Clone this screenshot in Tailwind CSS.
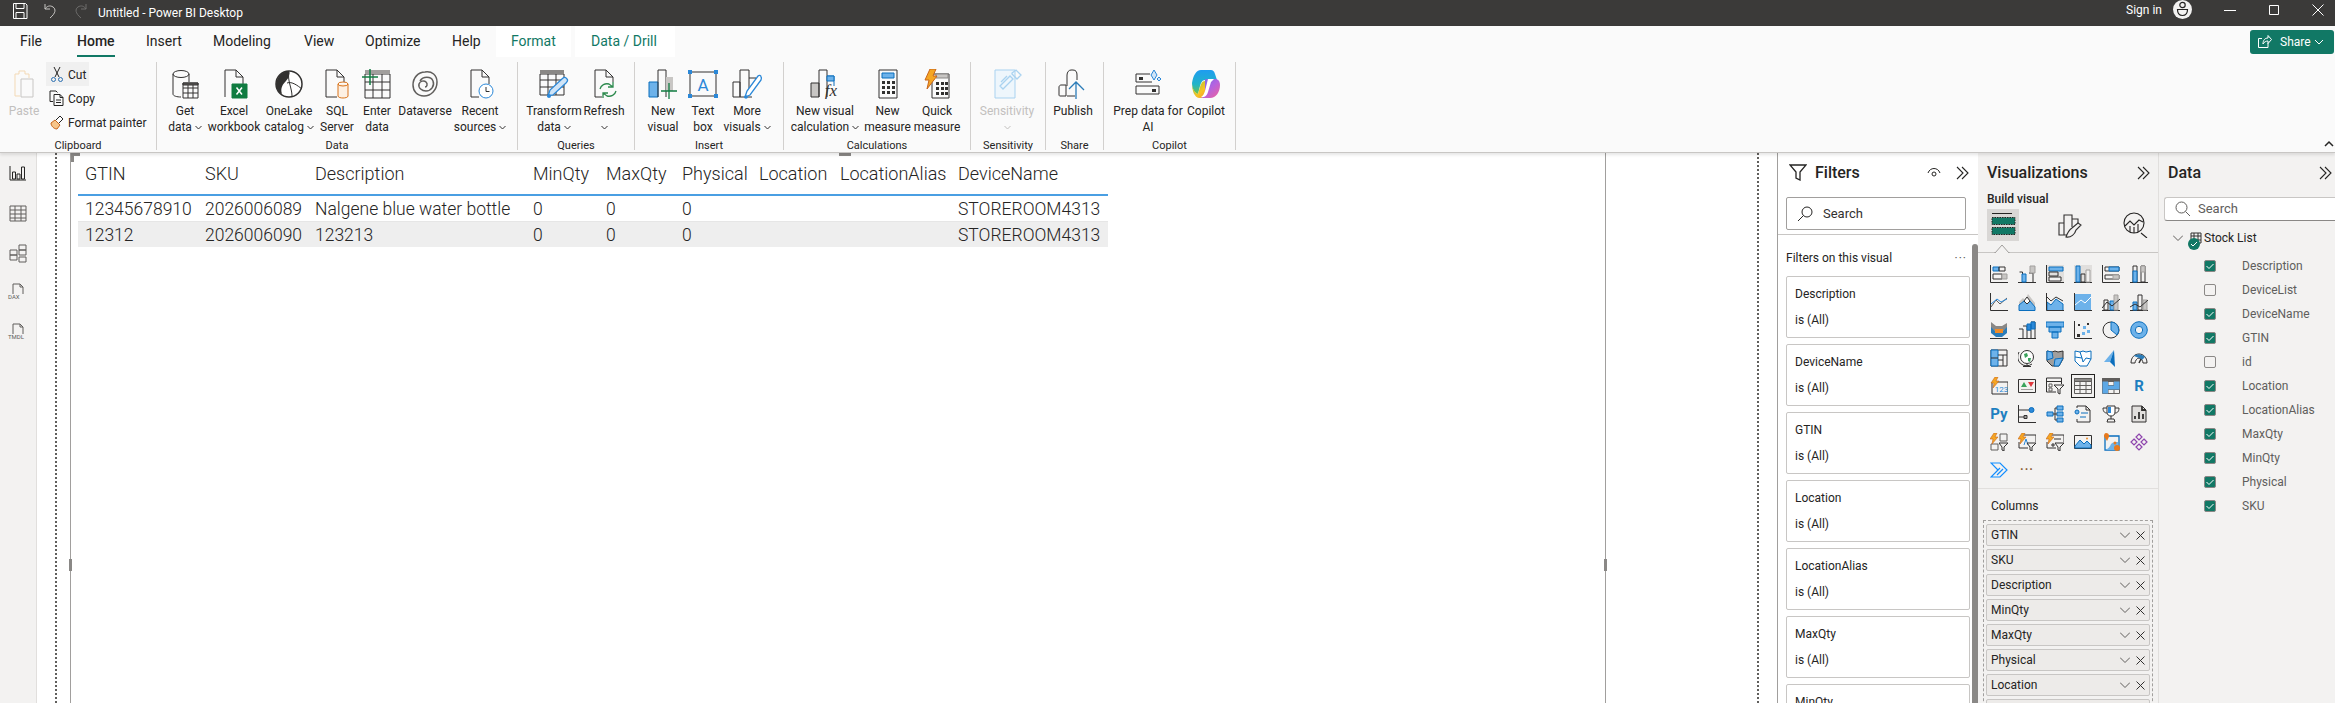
<!DOCTYPE html>
<html lang="en">
<head>
<meta charset="UTF-8">
<title>Untitled - Power BI Desktop</title>
<script src="https://cdn.jsdelivr.net/npm/@tailwindcss/browser@4"></script>
</head>
<body class="h-screen overflow-hidden flex flex-col bg-white text-[#252423] font-[Roboto,sans-serif] text-xs">

<!-- Title bar -->
<div class="h-[26px] shrink-0 bg-[#3b3a39] flex text-white">
  <svg class="w-[18px] h-[18px] ml-[11px] mt-[2px]" viewBox="0 0 18 18" fill="none" stroke="#fff"><path d="M2.5 1.5h12l1.5 1.500v13.500h-13.500zM5 1.500v5h8v-5M5 16.500v-6h8v6"/></svg>
  <svg class="w-[16px] h-[18px] ml-[14px] mt-[1px]" viewBox="0 0 16 18" fill="none" stroke="#c8c6c4"><path d="M2 3v5h5M2 8c2-3 5-4 8-2 3 2 3 6-3 11"/></svg>
  <svg class="w-[16px] h-[18px] ml-[13px] mt-[1px]" viewBox="0 0 16 18" fill="none" stroke="#6e6d6c"><path d="M14 3v5h-5M14 8c-2-3-5-4-8-2-3 2-3 6 3 11"/></svg>
  <span class="ml-[10px] leading-[26px]">Untitled - Power BI Desktop</span>
  <span class="ml-auto leading-[20px]">Sign in</span>
  <div class="w-[19px] h-[19px] ml-[11px] rounded-full bg-[#f3f2f1] overflow-hidden">
    <svg class="w-[19px] h-[19px]" viewBox="0 0 19 19" fill="none" stroke="#252423" stroke-width="1.200"><circle cx="9.500" cy="5" r="2.700"/><path d="M4.500 9.500h10c0 4-2 6-5 6s-5-2-5-6z"/></svg>
  </div>
  <svg class="w-[12px] h-[12px] ml-[32px] mt-[4px]" viewBox="0 0 12 12" fill="none" stroke="#fff"><path d="M0 6.500h12"/></svg>
  <svg class="w-[12px] h-[12px] ml-[32px] mt-[4px]" viewBox="0 0 12 12" fill="none" stroke="#fff"><path d="M1.500 1.500h9v9h-9z"/></svg>
  <svg class="w-[12px] h-[12px] ml-[32px] mt-[4px] mr-[11px]" viewBox="0 0 12 12" fill="none" stroke="#fff"><path d="M.5.5l11 11M11.500.5l-11 11"/></svg>
</div>

<!-- Ribbon -->
<div class="h-[127px] shrink-0 bg-[#fafafa] border-b border-[#c8c6c4] shadow-[0_2px_3px_rgba(0,0,0,0.1)] relative z-10">
  <div class="h-[31px] flex text-[14px] leading-[31px]">
    <span class="ml-[20px] w-[57px]">File</span>
    <span class="w-[69px]"><span class="inline-block h-[31px] w-[38px] font-medium border-b-2 border-[#117865]">Home</span></span>
    <span class="w-[67px]">Insert</span>
    <span class="w-[91px]">Modeling</span>
    <span class="w-[61px]">View</span>
    <span class="w-[87px]">Optimize</span>
    <span class="w-[44px]">Help</span>
    <span class="w-[75px] pl-[15px] bg-white text-[#117865]">Format</span>
    <span class="w-[100px] ml-[4px] pl-[16px] bg-white text-[#117865]">Data / Drill</span>
    <div class="ml-auto mr-[1px] mt-[4px] w-[84px] h-[24px] rounded-[3px] bg-[#117865] text-white text-[12px] leading-[24px] flex">
      <svg class="w-[15px] h-[15px] ml-[7px] mt-[4px]" viewBox="0 0 15 15" fill="none" stroke="#fff"><path d="M11 9v4.500H1.500V4.500H5M6 10c0-4 2-6 5-6V1.500l3.500 4-3.500 4V7c-2 0-4 1-5 3z"/></svg>
      <span class="ml-[8px]">Share</span>
      <svg class="w-[10px] h-[10px] ml-[3px] mt-[7px]" viewBox="0 0 10 10" fill="none" stroke="#fff"><path d="M1 3l4 4 4-4"/></svg>
    </div>
  </div>

  <div class="flex h-[96px] pt-[5px] relative text-[12px] leading-[16px] text-center">
    <!-- Clipboard -->
    <div class="w-[157px] h-[88px] border-r border-[#d2d0ce] flex flex-col">
      <div class="h-[77px] shrink-0 flex pl-[2px]">
        <div class="w-[44px] flex flex-col items-center pt-[7px] text-[#c2c0be]">
          <svg class="w-[28px] h-[30px]" viewBox="0 0 28 30" fill="none"><path d="M5 5h4V2h6v3h4v4M5 5v22h5" stroke="#f3d9b5"/><path d="M11 10h12v18H11z" stroke="#c8c6c4"/></svg>
          <span class="mt-[4px]">Paste</span>
        </div>
        <div class="flex flex-col items-start text-left">
          <div class="h-[24px] w-[43px] bg-[#f0f0f0] flex items-center pl-[3px]">
            <svg class="w-[16px] h-[17px] shrink-0" viewBox="0 0 16 17" fill="none" stroke="#252423"><path d="M5 1l5 10M11 1L6 11"/><circle cx="4.500" cy="13.500" r="2" stroke="#2b6fb0"/><circle cx="11.500" cy="13.500" r="2" stroke="#2b6fb0"/></svg>
            <span class="ml-[3px] mt-[2px]">Cut</span>
          </div>
          <div class="h-[24px] flex items-center pl-[3px]">
            <svg class="w-[16px] h-[16px] shrink-0" viewBox="0 0 16 16" fill="none" stroke="#252423"><path d="M4 11.500H1V1h6l1.500 1.500M5 4.500h6l3 3v8H5zM11 4.500v3h3M7 10h5M7 12.500h5"/></svg>
            <span class="ml-[3px] mt-[2px]">Copy</span>
          </div>
          <div class="h-[24px] flex items-center pl-[3px]">
            <svg class="w-[16px] h-[16px] shrink-0" viewBox="0 0 16 16" fill="none"><path d="M2 9l4-3 5 5-3 4c-3 0-6-3-6-6z" fill="#f7c58a" stroke="#c8651b"/><path d="M7 6l4-4 3 3-4 4" stroke="#252423" fill="#fff"/></svg>
            <span class="ml-[3px] mt-[2px] whitespace-nowrap">Format painter</span>
          </div>
        </div>
      </div>
      <div class="h-[14px] shrink-0 leading-[14px] text-[11px]">Clipboard</div>
    </div>

    <!-- Data -->
    <div class="w-[361px] h-[88px] border-r border-[#d2d0ce] flex flex-col">
      <div class="h-[77px] shrink-0 flex pl-[6px]">
        <div class="w-[44px] flex flex-col items-center pt-[7px]">
          <svg class="w-[28px] h-[30px]" viewBox="0 0 28 30" fill="none" stroke="#323130"><path d="M2 5v20c0 2 4 3 8 3M18 5v8"/><ellipse cx="10" cy="5" rx="8" ry="3.500"/><path d="M12 14h15v15H12zM12 19h15M12 24h15M17 14v15M22 14v15"/><path d="M12 14h15v2H12z" fill="#605e5c"/></svg>
          <span class="mt-[4px]">Get<br>data <svg class="inline w-[7px] h-[5px]" viewBox="0 0 7 5" fill="none" stroke="#323130"><path d="M.5 1l3 3 3-3"/></svg></span>
        </div>
        <div class="w-[54px] flex flex-col items-center pt-[7px]">
          <svg class="w-[28px] h-[30px]" viewBox="0 0 28 30" fill="none" stroke="#323130"><path d="M5 28V1h11l7 7v8M16 1v7h7"/><path d="M12 15h15v14H12z" fill="#107c41" stroke="#107c41"/><path d="M16.500 18.500l5.500 7M22 18.500l-5.500 7" stroke="#fff" stroke-width="1.500"/></svg>
          <span class="mt-[4px]">Excel<br>workbook</span>
        </div>
        <div class="w-[56px] flex flex-col items-center pt-[7px]">
          <svg class="w-[30px] h-[30px]" viewBox="0 0 30 30" fill="none"><circle cx="15" cy="15" r="13" fill="#fff" stroke="#323130" stroke-width="1.500"/><path d="M2 15C3 7 9 2 15 2c1 3 0 7-3 10-3 3-6 7-4 13-4-2-6-6-6-10z" fill="#323130"/><path d="M13 14c5-2 11 3 15 6M15 3c-2 8 3 16 3 24" stroke="#323130"/></svg>
          <span class="mt-[4px]">OneLake<br>catalog <svg class="inline w-[7px] h-[5px]" viewBox="0 0 7 5" fill="none" stroke="#323130"><path d="M.5 1l3 3 3-3"/></svg></span>
        </div>
        <div class="w-[40px] flex flex-col items-center pt-[7px]">
          <svg class="w-[28px] h-[30px]" viewBox="0 0 28 30" fill="none" stroke="#323130"><path d="M14 28H3V1h11l7 7v5M14 1v7h7"/><path d="M15 15v12c0 1.500 3 2 5 2s5-.5 5-2V15" stroke="#d9731a" fill="#fdf0e3"/><ellipse cx="20" cy="15" rx="5" ry="2" stroke="#d9731a"/></svg>
          <span class="mt-[4px]">SQL<br>Server</span>
        </div>
        <div class="w-[40px] flex flex-col items-center pt-[7px]">
          <svg class="w-[30px] h-[30px]" viewBox="0 0 30 30" fill="none" stroke="#323130"><path d="M3 5h25v24H3zM3 13h25M3 21h25M11 5v24M20 5v24"/><path d="M3 1h25v4H3z" fill="#a19f9d" stroke="none"/><path d="M8 0v16M0 8h16" stroke="#107c41" stroke-width="1.500"/></svg>
          <span class="mt-[4px]">Enter<br>data</span>
        </div>
        <div class="w-[56px] flex flex-col items-center pt-[7px]">
          <svg class="w-[28px] h-[30px]" viewBox="0 0 28 30" fill="none" stroke="#605e5c" stroke-width="1.500"><path d="M14 3c7-1 12 3 12 10 0 8-6 14-13 14C6 27 2 22 2 16 2 9 7 3 14 3z"/><path d="M9 12c3-5 11-5 13 0 2 5-2 10-7 10-4 0-8-3-7-7 1-3 5-4 7-2 2 2 1 5-1 5"/></svg>
          <span class="mt-[4px]">Dataverse</span>
        </div>
        <div class="w-[54px] flex flex-col items-center pt-[7px]">
          <svg class="w-[28px] h-[30px]" viewBox="0 0 28 30" fill="none" stroke="#323130"><path d="M13 28H5V1h11l7 7v7M16 1v7h7"/><circle cx="20" cy="22" r="7" stroke="#2b88d8" fill="#fff"/><path d="M20 18v4.500h3.500" stroke="#323130"/></svg>
          <span class="mt-[4px]">Recent<br>sources <svg class="inline w-[7px] h-[5px]" viewBox="0 0 7 5" fill="none" stroke="#323130"><path d="M.5 1l3 3 3-3"/></svg></span>
        </div>
      </div>
      <div class="h-[14px] shrink-0 leading-[14px] text-[11px]">Data</div>
    </div>

    <!-- Queries -->
    <div class="w-[117px] h-[88px] border-r border-[#d2d0ce] flex flex-col">
      <div class="h-[77px] shrink-0 flex pl-[6px]">
        <div class="w-[60px] flex flex-col items-center pt-[7px]">
          <svg class="w-[30px] h-[30px]" viewBox="0 0 30 30" fill="none" stroke="#323130"><path d="M1 5h24v21H1zM1 11h24M1 18h24M9 5v21M17 5v21"/><path d="M1 1h24v4H1z" fill="#8a8886" stroke="none"/><path d="M9 27l2-6L24 9c1-1 3-1 4 1 1 1 0 3-1 4L14 26z" fill="#cfe4f7" stroke="#2b88d8" stroke-width="1.300"/><circle cx="10" cy="27" r="2" fill="#2b88d8" stroke="none"/></svg>
          <span class="mt-[4px]">Transform<br>data <svg class="inline w-[7px] h-[5px]" viewBox="0 0 7 5" fill="none" stroke="#323130"><path d="M.5 1l3 3 3-3"/></svg></span>
        </div>
        <div class="w-[40px] flex flex-col items-center pt-[7px]">
          <svg class="w-[28px] h-[30px]" viewBox="0 0 28 30" fill="none" stroke="#323130"><path d="M12 28H5V1h11l7 7v5M16 1v7h7"/><path d="M10 20c1-4 5-6 9-5l4 3M26 22c-1 4-5 6-9 5l-4-3M23 13v5h-5M13 29v-5h5" stroke="#2d8a4e" stroke-width="1.300"/></svg>
          <span class="mt-[4px]">Refresh<br><svg class="inline w-[7px] h-[5px]" viewBox="0 0 7 5" fill="none" stroke="#323130"><path d="M.5 1l3 3 3-3"/></svg></span>
        </div>
      </div>
      <div class="h-[14px] shrink-0 leading-[14px] text-[11px]">Queries</div>
    </div>

    <!-- Insert -->
    <div class="w-[149px] h-[88px] border-r border-[#d2d0ce] flex flex-col">
      <div class="h-[77px] shrink-0 flex pl-[8px]">
        <div class="w-[40px] flex flex-col items-center pt-[7px]">
          <svg class="w-[30px] h-[30px]" viewBox="0 0 30 30" fill="none" stroke="#323130"><path d="M1 13h9v15H1z" fill="#6db2ea" stroke="#0a6ebd"/><path d="M10 28V1h8v27"/><path d="M18 8h7v14h-7z" fill="#c8c6c4" stroke="none"/><path d="M21 14v16M13 22h16" stroke="#107c41" stroke-width="1.300"/></svg>
          <span class="mt-[4px]">New<br>visual</span>
        </div>
        <div class="w-[40px] flex flex-col items-center pt-[7px]">
          <svg class="w-[30px] h-[30px]" viewBox="0 0 30 30" fill="none" stroke="#323130"><path d="M2 3h26v24H2z"/><path d="M0 1h4v4H0zM26 1h4v4h-4zM0 25h4v4H0zM26 25h4v4h-4z" fill="#2b88d8" stroke="none"/><text x="15" y="22" text-anchor="middle" font-size="17" font-family="Roboto" fill="#2b88d8" stroke="none">A</text></svg>
          <span class="mt-[4px]">Text<br>box</span>
        </div>
        <div class="w-[48px] flex flex-col items-center pt-[7px]">
          <svg class="w-[30px] h-[30px]" viewBox="0 0 30 30" fill="none" stroke="#323130"><path d="M1 28V13h7v15zM8 28V1h9v20M17 9h7v4M8 28h12"/><path d="M13 28l2-6L26 7c1-1 3-1 3 1 1 1 0 2 0 3L18 26z" fill="#fff" stroke="#2b88d8" stroke-width="1.300"/><circle cx="14" cy="28" r="1.800" fill="#2b88d8" stroke="none"/></svg>
          <span class="mt-[4px]">More<br>visuals <svg class="inline w-[7px] h-[5px]" viewBox="0 0 7 5" fill="none" stroke="#323130"><path d="M.5 1l3 3 3-3"/></svg></span>
        </div>
      </div>
      <div class="h-[14px] shrink-0 leading-[14px] text-[11px]">Insert</div>
    </div>

    <!-- Calculations -->
    <div class="w-[187px] h-[88px] border-r border-[#d2d0ce] flex flex-col">
      <div class="h-[77px] shrink-0 flex pl-[3px]">
        <div class="w-[76px] flex flex-col items-center pt-[7px]">
          <svg class="w-[30px] h-[30px]" viewBox="0 0 30 30" fill="none" stroke="#323130"><path d="M1 14h8v14H1z" fill="#c8c6c4"/><path d="M9 28V1h8v27"/><path d="M17 7h7v10" stroke="#0a6ebd"/><path d="M17 7h7v5h-7z" fill="#6db2ea" stroke="#0a6ebd"/><text x="21" y="27" text-anchor="middle" font-size="17" font-style="italic" font-family="Liberation Serif" fill="#323130" stroke="none">fx</text></svg>
          <span class="mt-[4px] whitespace-nowrap">New visual<br>calculation <svg class="inline w-[7px] h-[5px]" viewBox="0 0 7 5" fill="none" stroke="#323130"><path d="M.5 1l3 3 3-3"/></svg></span>
        </div>
        <div class="w-[49px] flex flex-col items-center pt-[7px]">
          <svg class="w-[22px] h-[30px]" viewBox="0 0 22 30" fill="none" stroke="#323130"><path d="M2 1h18v28H2z"/><path d="M5 4h12v5H5z" fill="#6db2ea" stroke="#0a6ebd"/><path d="M5 12h3v3H5zM10 12h3v3h-3zM15 12h3v3h-3zM5 17h3v3H5zM10 17h3v3h-3zM15 17h3v3h-3zM5 22h3v3H5zM10 22h3v3h-3zM15 22h3v3h-3z" fill="#323130" stroke="none"/></svg>
          <span class="mt-[4px]">New<br>measure</span>
        </div>
        <div class="w-[50px] flex flex-col items-center pt-[7px]">
          <svg class="w-[26px] h-[30px]" viewBox="0 0 26 30" fill="none" stroke="#323130"><path d="M8 5h17v24H8z"/><path d="M12 5h12v4H12z" fill="#c8c6c4" stroke="#8a8886"/><path d="M12 13h3v3h-3zM17 13h3v3h-3zM21 13h3v3h-3zM12 18h3v3h-3zM17 18h3v3h-3zM21 18h3v3h-3zM12 23h3v3h-3zM17 23h3v3h-3zM21 23h3v3h-3z" fill="#323130" stroke="none"/><path d="M6 0h6L9 7h4L3 20l2-9H1z" fill="#f5a623" stroke="#c8651b"/></svg>
          <span class="mt-[4px]">Quick<br>measure</span>
        </div>
      </div>
      <div class="h-[14px] shrink-0 leading-[14px] text-[11px]">Calculations</div>
    </div>

    <!-- Sensitivity -->
    <div class="w-[75px] h-[88px] border-r border-[#d2d0ce] flex flex-col">
      <div class="h-[77px] shrink-0 flex pl-[6px]">
        <div class="w-[60px] flex flex-col items-center pt-[7px] text-[#c2c0be]">
          <svg class="w-[30px] h-[30px]" viewBox="0 0 30 30" fill="none" stroke="#a9d2f0"><path d="M3 1h20v28H3z" fill="#eef6fc"/><path d="M8 17l10-10 3 3-10 10zM20 4l4-3 5 5-4 4-5-5zM9 13l6-6" stroke-width="1.300"/></svg>
          <span class="mt-[4px]">Sensitivity<br><svg class="inline w-[7px] h-[5px]" viewBox="0 0 7 5" fill="none" stroke="#c2c0be"><path d="M.5 1l3 3 3-3"/></svg></span>
        </div>
      </div>
      <div class="h-[14px] shrink-0 leading-[14px] text-[11px]">Sensitivity</div>
    </div>

    <!-- Share -->
    <div class="w-[58px] h-[88px] border-r border-[#d2d0ce] flex flex-col">
      <div class="h-[77px] shrink-0 flex pl-[4px]">
        <div class="w-[46px] flex flex-col items-center pt-[7px]">
          <svg class="w-[30px] h-[30px]" viewBox="0 0 30 30" fill="none" stroke="#323130"><path d="M4 27H2c-1 0-1-1-1-1V18c0-1 1-2 2-2h5v11zM9 17V6c0-3 2-5 4-5h2c3 0 4 2 4 5v5M9 27h8"/><path d="M18 30V13M11 20l7-7 8 8" stroke="#2b7cb8" stroke-width="1.300"/></svg>
          <span class="mt-[4px]">Publish</span>
        </div>
      </div>
      <div class="h-[14px] shrink-0 leading-[14px] text-[11px]">Share</div>
    </div>

    <!-- Copilot -->
    <div class="w-[132px] h-[88px] border-r border-[#d2d0ce] flex flex-col">
      <div class="h-[77px] shrink-0 flex pl-[8px]">
        <div class="w-[72px] flex flex-col items-center pt-[7px]">
          <svg class="w-[26px] h-[30px]" viewBox="0 0 26 30" fill="none" stroke="#323130"><path d="M1 5h14M1 17h23v8H1zM1 5v8h16"/><path d="M4 8h4v3H4zM17 20h4v3h-4z" fill="#323130" stroke="none"/><path d="M16 6l3-5 3 5-3 5zM22 10l2-2 2 2-2 2z" stroke="#2b88d8" fill="#cfe4f7"/></svg>
          <span class="mt-[4px] whitespace-nowrap">Prep data for<br>AI</span>
        </div>
        <div class="w-[44px] flex flex-col items-center pt-[7px]">
          <svg class="w-[30px] h-[30px]" viewBox="0 0 30 30">
            <defs>
              <linearGradient id="cpa" x1="0" y1="0" x2="0" y2="1"><stop offset="0" stop-color="#1f9cf0"/><stop offset=".6" stop-color="#21b4c8"/><stop offset="1" stop-color="#6cc24a"/></linearGradient>
              <linearGradient id="cpb" x1="0" y1="0" x2="1" y2="1"><stop offset="0" stop-color="#8dc63f"/><stop offset=".6" stop-color="#f7c325"/><stop offset="1" stop-color="#f08c28"/></linearGradient>
              <linearGradient id="cpc" x1="0" y1="0" x2="1" y2="1"><stop offset="0" stop-color="#6a6fe8"/><stop offset=".5" stop-color="#b463e0"/><stop offset="1" stop-color="#f0609a"/></linearGradient>
            </defs>
            <path d="M10 1h10c2 0 3 1 4 4l2 6H14c-3 0-4 3-5 6l-2 8C3 24 1 19 1 14 2 7 5 1 10 1z" fill="url(#cpa)"/>
            <path d="M1 14c0 7 2 15 8 15 3 0 4-2 5-5l3-12h-3c-3 0-4 3-5 6l-2 7C4 24 1 19 1 14z" fill="url(#cpb)"/>
            <path d="M14 10h10c3 0 5 2 5 6 0 7-4 13-10 13H9c3 0 4-2 5-5z" fill="url(#cpc)"/>
            <path d="M17 10h6l-3 3-3 10c-1 3-2 4-4 5h-3c2-1 3-3 4-6z" fill="#fff"/>
          </svg>
          <span class="mt-[4px]">Copilot</span>
        </div>
      </div>
      <div class="h-[14px] shrink-0 leading-[14px] text-[11px]">Copilot</div>
    </div>

    <svg class="absolute right-[1px] bottom-[5px] w-[10px] h-[8px]" viewBox="0 0 10 8" fill="none" stroke="#252423" stroke-width="1.500"><path d="M1 6l4-4 4 4"/></svg>
  </div>
</div>

<!-- Body -->
<div class="flex-1 flex min-h-0">
  <!-- View switcher -->
  <div class="w-[37px] shrink-0 bg-[#f3f2f1] border-r border-[#e1dfdd] flex flex-col items-center pt-[10px] gap-[20px]">
    <svg class="w-[20px] h-[20px]" viewBox="0 0 20 20" fill="none" stroke="#252423"><path d="M2 3v14h16M4.500 9h3v7h-3zM9 11h3v5H9zM13.500 4h3v12h-3z"/></svg>
    <svg class="w-[20px] h-[20px]" viewBox="0 0 20 20" fill="none" stroke="#605e5c"><path d="M2 3h16v15H2zM2 7h16M2 11h16M2 15h16M7 3v15M13 3v15"/></svg>
    <svg class="w-[20px] h-[20px]" viewBox="0 0 20 20" fill="none" stroke="#605e5c"><path d="M11 2h7v5h-7zM11 7h7v5h-7zM11 14h7v5h-7zM2 7h7v5H2zM2 12h7v5H2z"/></svg>
    <div class="relative w-[20px] h-[20px]">
      <svg class="w-[20px] h-[20px]" viewBox="0 0 20 20" fill="none" stroke="#605e5c"><path d="M5 11V1h7l3 3v7M12 1v3h3"/></svg>
      <span class="absolute left-0 top-[10px] text-[6px] leading-[7px] text-[#605e5c]">DAX</span>
    </div>
    <div class="relative w-[20px] h-[20px]">
      <svg class="w-[20px] h-[20px]" viewBox="0 0 20 20" fill="none" stroke="#605e5c"><path d="M5 11V1h7l3 3v7M12 1v3h3"/></svg>
      <span class="absolute left-0 top-[10px] text-[6px] leading-[7px] text-[#605e5c]">TMDL</span>
    </div>
  </div>

  <!-- Report canvas -->
  <div class="w-[1740px] shrink-0 flex pl-[18px] pr-[18px]">
    <div class="flex-1 flex border-x-2 border-dotted border-[#605e5c] pl-[13px]">
      <div class="relative w-[1536px] border-x border-[#a19f9d]">
        <div class="absolute left-0 top-0 w-[9px] h-[3px] bg-[#8a8886]"></div>
        <div class="absolute left-0 top-0 w-[3px] h-[9px] bg-[#8a8886]"></div>
        <div class="absolute left-[768px] top-0 w-[12px] h-[3px] bg-[#8a8886]"></div>
        <div class="absolute -left-[2px] top-[406px] w-[3px] h-[12px] bg-[#8a8886]"></div>
        <div class="absolute -right-[2px] top-[406px] w-[3px] h-[12px] bg-[#8a8886]"></div>
        <div class="ml-[7px] w-[1030px] text-[17.5px] font-light text-[#252423]">
          <div class="h-[43px] text-[18px] grid grid-cols-[119px_110px_218px_73px_76px_77px_81px_118px_158px] items-center border-b-2 border-[#4a9fe3]">
            <span class="pl-[7px]">GTIN</span><span class="pl-[8px]">SKU</span><span class="pl-[8px]">Description</span><span class="pl-[8px]">MinQty</span><span class="pl-[8px]">MaxQty</span><span class="pl-[8px]">Physical</span><span class="pl-[8px]">Location</span><span class="pl-[8px] whitespace-nowrap">LocationAlias</span><span class="pl-[8px]">DeviceName</span>
          </div>
          <div class="h-[26px] pt-[2px] grid grid-cols-[119px_110px_218px_73px_76px_77px_81px_118px_158px] items-center border-b border-[#e6e6e6]">
            <span class="pl-[7px]">12345678910</span><span class="pl-[8px]">2026006089</span><span class="pl-[8px] whitespace-nowrap">Nalgene blue water bottle</span><span class="pl-[8px]">0</span><span class="pl-[8px]">0</span><span class="pl-[8px]">0</span><span></span><span></span><span class="pl-[8px]">STOREROOM4313</span>
          </div>
          <div class="h-[25px] pt-[2px] grid grid-cols-[119px_110px_218px_73px_76px_77px_81px_118px_158px] items-center bg-[#eeeeee]">
            <span class="pl-[7px]">12312</span><span class="pl-[8px]">2026006090</span><span class="pl-[8px]">123213</span><span class="pl-[8px]">0</span><span class="pl-[8px]">0</span><span class="pl-[8px]">0</span><span></span><span></span><span class="pl-[8px]">STOREROOM4313</span>
          </div>
        </div>
      </div>
    </div>
  </div>

  <!-- Filters pane -->
  <div class="w-[201px] shrink-0 border-l border-[#a19f9d] overflow-hidden flex flex-col relative">
    <div class="h-[38px] shrink-0 flex items-center pt-[1px]">
      <svg class="w-[18px] h-[17px] ml-[11px]" viewBox="0 0 18 17" fill="none" stroke="#252423" stroke-width="1.300"><path d="M1 1h16l-6 7v8l-4-2V8z"/></svg>
      <span class="ml-[8px] text-[16px] font-medium">Filters</span>
      <svg class="w-[14px] h-[12px] ml-auto" viewBox="0 0 14 12" fill="none" stroke="#252423"><path d="M1 6c2-6 10-6 12 0"/><circle cx="7" cy="7" r="2"/></svg>
      <svg class="w-[14px] h-[14px] ml-[15px] mr-[8px]" viewBox="0 0 14 14" fill="none" stroke="#252423" stroke-width="1.100"><path d="M1 1l6 6-6 6M6 1l6 6-6 6"/></svg>
    </div>
    <div class="ml-[8px] mt-[6px] w-[180px] h-[33px] shrink-0 border border-[#a19f9d] rounded-[2px] flex items-center">
      <svg class="w-[16px] h-[16px] ml-[10px]" viewBox="0 0 16 16" fill="none" stroke="#252423"><circle cx="10" cy="6" r="5"/><path d="M6.500 9.500L1 15"/></svg>
      <span class="ml-[10px] text-[13px] text-[#323130]">Search</span>
    </div>
    <div class="h-[5px] shrink-0 border-b border-[#c8c6c4]"></div>
    <div class="h-[41px] shrink-0 flex items-center pl-[8px] pr-[11px] pb-[7px] pt-[12px]">
      <span>Filters on this visual</span><span class="ml-auto text-[#605e5c] tracking-[1px] leading-[8px]">···</span>
    </div>
    <div class="ml-[8px] w-[184px] flex flex-col gap-[6px]">
      <div class="h-[62px] shrink-0 border border-[#c8c6c4] rounded-[2px] pl-[8px] pt-[9px] flex flex-col gap-[10px] leading-[16px]"><span>Description</span><span>is (All)</span></div>
      <div class="h-[62px] shrink-0 border border-[#c8c6c4] rounded-[2px] pl-[8px] pt-[9px] flex flex-col gap-[10px] leading-[16px]"><span>DeviceName</span><span>is (All)</span></div>
      <div class="h-[62px] shrink-0 border border-[#c8c6c4] rounded-[2px] pl-[8px] pt-[9px] flex flex-col gap-[10px] leading-[16px]"><span>GTIN</span><span>is (All)</span></div>
      <div class="h-[62px] shrink-0 border border-[#c8c6c4] rounded-[2px] pl-[8px] pt-[9px] flex flex-col gap-[10px] leading-[16px]"><span>Location</span><span>is (All)</span></div>
      <div class="h-[62px] shrink-0 border border-[#c8c6c4] rounded-[2px] pl-[8px] pt-[9px] flex flex-col gap-[10px] leading-[16px]"><span>LocationAlias</span><span>is (All)</span></div>
      <div class="h-[62px] shrink-0 border border-[#c8c6c4] rounded-[2px] pl-[8px] pt-[9px] flex flex-col gap-[10px] leading-[16px]"><span>MaxQty</span><span>is (All)</span></div>
      <div class="h-[62px] shrink-0 border border-[#c8c6c4] rounded-[2px] pl-[8px] pt-[9px] flex flex-col gap-[10px] leading-[16px]"><span>MinQty</span><span>is (All)</span></div>
    </div>
    <div class="absolute right-0 top-[91px] bottom-0 w-[6px] rounded-t-[3px] bg-[#8a8886]"></div>
  </div>

  <!-- Visualizations pane -->
  <div class="w-[181px] shrink-0 bg-[#f3f2f1] border-r border-[#e1dfdd] overflow-hidden flex flex-col">
    <div class="h-[38px] shrink-0 flex items-center pl-[9px] pt-[1px]">
      <span class="text-[16px] font-medium">Visualizations</span>
      <svg class="w-[14px] h-[14px] ml-auto mr-[7px]" viewBox="0 0 14 14" fill="none" stroke="#252423" stroke-width="1.100"><path d="M1 1l6 6-6 6M6 1l6 6-6 6"/></svg>
    </div>
    <div class="h-[18px] shrink-0 pl-[9px] font-medium leading-[16px]">Build visual</div>
    <div class="h-[44px] shrink-0 flex border-b border-[#c8c6c4] relative">
      <div class="ml-[9px] w-[32px] h-[32px] bg-[#d9d7d5] flex items-center justify-center">
        <svg class="w-[26px] h-[26px]" viewBox="0 0 26 26" fill="none"><path d="M2 1.500h20" stroke="#252423"/><path d="M2 5.500h23v7H2zM2 15.500h23v7H2z" fill="#117865" stroke="#252423" stroke-dasharray="1.500 1"/></svg>
      </div>
      <svg class="w-[24px] h-[26px] ml-[39px] mt-[3px]" viewBox="0 0 24 26" fill="none" stroke="#323130" stroke-width="1.100"><path d="M1 23V11h5v12zM6 11V3h8v12M14 7h6v5M6 23h4"/><path d="M8 25c5 1 9-3 10-7l5-5-3-2-6 5c-3 2-5 6-6 9z" fill="#f3f2f1"/></svg>
      <svg class="w-[25px] h-[26px] ml-[41px] mt-[3px]" viewBox="0 0 25 26" fill="none" stroke="#252423" stroke-width="1.100"><circle cx="11" cy="11" r="10"/><path d="M2 14l5-5 4 4 5-5 4 2M7 14v6M11 15v6M15 12v8M18 21l6 5" /></svg>
      <svg class="absolute left-[16px] bottom-[-1px] w-[16px] h-[9px]" viewBox="0 0 16 9"><path d="M0 9h1l7-8 7 8h1" fill="#f3f2f1" stroke="#a19f9d"/></svg>
    </div>
    <div class="pl-[7px] pt-[7px] pb-[4px] shrink-0 border-b border-[#e1dfdd] grid grid-cols-[repeat(6,28px)] auto-rows-[28px] place-items-center">
      <!-- row 1 -->
      <svg class="w-[18px] h-[18px]" viewBox="0 0 18 18" fill="none" stroke="#323130"><path d="M.5 0v17.500H18"/><path d="M3 2h6v4H3z" fill="#6db2ea" stroke="#0a6ebd"/><path d="M9 2h6v4H9z"/><path d="M3 9h9v5H3z"/><path d="M12 9h5v5h-5z" fill="#c8c6c4" stroke="#a19f9d"/></svg>
      <svg class="w-[18px] h-[18px]" viewBox="0 0 18 18" fill="none" stroke="#323130"><path d="M0 17.500h18"/><path d="M1.500 7h3v10"/><path d="M4 9h4v8H4z" fill="#6db2ea" stroke="#0a6ebd"/><path d="M11 8h4v9"/><path d="M12 1h5v7h-5z" fill="#c8c6c4" stroke="#a19f9d"/></svg>
      <svg class="w-[18px] h-[18px]" viewBox="0 0 18 18" fill="none" stroke="#323130"><path d="M0 0h18v18H0z" fill="#e1dfdd" stroke="none"/><path d="M.5 0v17.500H18"/><path d="M3 2h14v4H3z" fill="#6db2ea" stroke="#0a6ebd"/><path d="M3 7h9v4H3z"/><path d="M3 12h12v4H3z" fill="#f3f2f1"/></svg>
      <svg class="w-[18px] h-[18px]" viewBox="0 0 18 18" fill="none" stroke="#323130"><path d="M0 0h18v18H0z" fill="#e1dfdd" stroke="none"/><path d="M0 17.500h18"/><path d="M2 1h4v16H2z" fill="#6db2ea" stroke="#0a6ebd"/><path d="M7 9h4v8H7z"/><path d="M12 5h4v12h-4z" fill="#f3f2f1" stroke="#a19f9d"/></svg>
      <svg class="w-[18px] h-[18px]" viewBox="0 0 18 18" fill="none" stroke="#323130"><path d="M.5 0v17.500H18"/><path d="M3 2h14v4H3z"/><path d="M7 2h10v4H7z" fill="#6db2ea" stroke="#0a6ebd"/><path d="M3 10h14v4H3z"/><path d="M11 10h6v4h-6z" fill="#c8c6c4" stroke="#a19f9d"/></svg>
      <svg class="w-[18px] h-[18px]" viewBox="0 0 18 18" fill="none" stroke="#323130"><path d="M0 17.500h18"/><path d="M3 1h4v16H3z"/><path d="M3 6h4v11H3z" fill="#6db2ea" stroke="#0a6ebd"/><path d="M11 1h4v16h-4z"/><path d="M11 1h4v6h-4z" fill="#c8c6c4" stroke="#a19f9d"/></svg>
      <!-- row 2 -->
      <svg class="w-[18px] h-[18px]" viewBox="0 0 18 18" fill="none" stroke="#323130"><path d="M.5 0v17.500H18"/><path d="M1 14l5-7 4 4 7-6" stroke="#605e5c"/><path d="M1 11l6-5 4 3 6-3" stroke="#2b88d8"/></svg>
      <svg class="w-[18px] h-[18px]" viewBox="0 0 18 18" fill="none" stroke="#323130"><path d="M1 9l4-4 2 2 3-6 7 9v7.500H1z" fill="#c8c6c4" stroke="none"/><path d="M1 12l5-4 3 3 3-3 5 6v3.500H1z" fill="#6db2ea" stroke="#0a6ebd"/><path d="M6 8l3-4 3 4-3 3z" fill="#fff" stroke="#323130"/></svg>
      <svg class="w-[18px] h-[18px]" viewBox="0 0 18 18" fill="none" stroke="#0a6ebd"><path d="M1 9l4 3 5-6 7 5v6.500H1z" fill="#6db2ea"/><path d="M1 4l4 4 5-4 7 4M.5 0v17.500H18" stroke="#323130"/></svg>
      <svg class="w-[18px] h-[18px]" viewBox="0 0 18 18" fill="none" stroke="#0a6ebd"><path d="M1 1h16v16H1z" fill="#6db2ea" stroke="none"/><path d="M1 12l6-5 4 3 6-6" stroke="#fff"/><path d="M.5 0v17.500H18" stroke="#323130"/></svg>
      <svg class="w-[18px] h-[18px]" viewBox="0 0 18 18" fill="none" stroke="#323130"><path d="M0 17.500h18"/><path d="M2 7h4v10H2z"/><path d="M8 8h4v9H8z" fill="#6db2ea" stroke="#0a6ebd"/><path d="M12 2h4v15h-4z" fill="#c8c6c4" stroke="#a19f9d"/><path d="M0 15l5-6 5 4 8-7"/></svg>
      <svg class="w-[18px] h-[18px]" viewBox="0 0 18 18" fill="none" stroke="#323130"><path d="M0 17.500h18"/><path d="M3 9h4v8H3z" fill="#6db2ea" stroke="#0a6ebd"/><path d="M8 2h4v15H8z"/><path d="M13 7h4v10h-4z" fill="#c8c6c4" stroke="#a19f9d"/><path d="M0 14l5-3 5 3 8-7"/></svg>
      <!-- row 3 -->
      <svg class="w-[18px] h-[18px]" viewBox="0 0 18 18" fill="none" stroke="#323130"><path d="M0 17.500h18"/><path d="M1 1l5 4 6 0 5-3v5l-5 4H6L1 7z" fill="#8a8886" stroke="none"/><path d="M1 6l5 5h6l5-5v6l-5 4H6l-5-4z" fill="#2b7cb8" stroke="none"/><path d="M5 8h8v4H5z" fill="#f08c28" stroke="none"/></svg>
      <svg class="w-[18px] h-[18px]" viewBox="0 0 18 18" fill="none" stroke="#323130"><path d="M0 17.500h18"/><path d="M1 8h4v9M5 5h4v12M9 9h4v8M13 1h4v16"/><path d="M9 3h4v6H9zM13 1h4v7h-4z" fill="#2b88d8" stroke="#0a6ebd"/></svg>
      <svg class="w-[18px] h-[18px]" viewBox="0 0 18 18" fill="none" stroke="#0a6ebd"><path d="M0 1h18v5H0zM3 6h12v5H3zM6 11h6v6H6z" fill="#6db2ea"/></svg>
      <svg class="w-[18px] h-[18px]" viewBox="0 0 18 18" fill="none" stroke="#323130"><path d="M.5 0v17.500H18"/><path d="M3 13h3v3H3z" fill="#323130" stroke="none"/><path d="M9 5h3v3H9zM13 9h3v3h-3zM8 11h3v3H8z" fill="#6db2ea" stroke="none"/><path d="M4 3h2v2H4zM13 2h2v2h-2z" fill="#323130" stroke="none"/></svg>
      <svg class="w-[18px] h-[18px]" viewBox="0 0 18 18" fill="none" stroke="#323130"><circle cx="9" cy="9" r="8"/><path d="M9 1a8 8 0 0 1 6 13L9 9z" fill="#6db2ea" stroke="#0a6ebd"/></svg>
      <svg class="w-[18px] h-[18px]" viewBox="0 0 18 18" fill="none" stroke="#0a6ebd"><circle cx="9" cy="9" r="6" stroke-width="4.500" stroke="#6db2ea"/><circle cx="9" cy="9" r="8.300"/><circle cx="9" cy="9" r="3.700"/></svg>
      <!-- row 4 -->
      <svg class="w-[18px] h-[18px]" viewBox="0 0 18 18" fill="none" stroke="#323130"><path d="M1 1h16v16H1z"/><path d="M1 1h7v16H1z" fill="#6db2ea" stroke="#0a6ebd"/><path d="M1 9h7M8 6h9M13 6v11M8 11h5"/></svg>
      <svg class="w-[18px] h-[18px]" viewBox="0 0 18 18" fill="none" stroke="#323130"><circle cx="9" cy="8" r="6.500" fill="#fff"/><path d="M6 5l3-1 1 3-3 2zM10 9l3 0-1 4-2-1z" fill="#3aa35c" stroke="none"/><path d="M1 3a9 9 0 0 0 13 12M9 15v2M5 17.500h8"/></svg>
      <svg class="w-[18px] h-[18px]" viewBox="0 0 18 18" fill="none" stroke="#0a6ebd"><path d="M1 2l5 1 3-1 3 1 5-1v8l-4 7H6L1 12z" fill="#a19f9d" stroke="#323130"/><path d="M1 2l5 1 1 6-6 2zM9 10l8-1-4 8H8z" fill="#6db2ea"/></svg>
      <svg class="w-[18px] h-[18px]" viewBox="0 0 18 18" fill="#fff" stroke="#0a6ebd"><path d="M1 2l5 1 3-1 3 1 5-1v8l-4 7H6L1 12z"/><path d="M1 8l7 1 1 4 3-4 5 1M6 3l2 6" /></svg>
      <svg class="w-[18px] h-[18px]" viewBox="0 0 18 18"><path d="M12 1L2 13l6 0z" fill="#6db2ea"/><path d="M12 1l-4 12 5 5z" fill="#0a6ebd"/></svg>
      <svg class="w-[18px] h-[18px]" viewBox="0 0 18 18" fill="none" stroke="#323130"><path d="M1 14C1 8 5 5 9 5s8 3 8 9h-4c0-2-2-5-4-5s-4 3-4 5z"/><path d="M4 7c2-2 7-3 11 1l-3 3c-1-1-2-2-3-2z" fill="#2b7cb8" stroke="none"/><path d="M9 14l2-4" stroke-width="1.500"/></svg>
      <!-- row 5 -->
      <svg class="w-[18px] h-[18px]" viewBox="0 0 18 18" fill="none" stroke="#323130"><path d="M2 5h16v12H2z"/><path d="M5 0h3L6 4h3L3 11l1-5H1z" fill="#f5a623" stroke="#c8651b" stroke-width=".6"/><text x="11.500" y="14.500" text-anchor="middle" font-size="8" font-family="Roboto" fill="#2b88d8" stroke="none">123</text></svg>
      <svg class="w-[18px] h-[18px]" viewBox="0 0 18 18" fill="none" stroke="#323130"><path d="M.5 2.500h17v13H.5z"/><path d="M3 10l3-5 3 5z" fill="#3aa35c" stroke="none"/><path d="M10 5h6l-3 5z" fill="#e0393e" stroke="none"/><path d="M3 12.500h12" stroke="#a19f9d"/></svg>
      <svg class="w-[18px] h-[18px]" viewBox="0 0 18 18" fill="none" stroke="#323130"><path d="M10 15H.5V1h15v6M.5 4.500h15"/><path d="M3 7h3v3H3zM3 11h3v3H3z" stroke="#605e5c"/><path d="M8 8h10l-4 4v5l-2-1v-4z" fill="#f3f2f1"/></svg>
      <div class="w-[24px] h-[24px] border border-[#252423] flex items-center justify-center">
        <svg class="w-[18px] h-[18px]" viewBox="0 0 18 18" fill="none" stroke="#605e5c"><path d="M.5 1.500h17v15H.5z"/><path d="M.5 1.500h17v3H.5z" fill="#8a8886"/><path d="M.5 8.500h17M.5 12.500h17M6 4.500v12M12 4.500v12"/></svg>
      </div>
      <svg class="w-[18px] h-[18px]" viewBox="0 0 18 18" fill="none" stroke="#605e5c"><path d="M.5 1.500h17v15H.5z"/><path d="M.5 1.500h17v3H.5z" fill="#605e5c"/><path d="M.5 8.500h17M.5 12.500h17M6 4.500v12M12 4.500v12"/><path d="M.5 4.500H6v12H.5zM12 4.500h5.500v8H12zM6 8.500h6v4H6z" fill="#5ca8e6" stroke="none"/></svg>
      <span class="w-[18px] text-center text-[15px] leading-[18px] font-bold text-[#1e7fc0]">R</span>
      <!-- row 6 -->
      <span class="w-[24px] text-center text-[15px] leading-[18px] font-bold text-[#1e7fc0]">Py</span>
      <svg class="w-[18px] h-[18px]" viewBox="0 0 18 18" fill="none" stroke="#323130"><path d="M.5 0v17.500H18M1 5h10M1 12h5"/><circle cx="13.500" cy="5" r="2.500" fill="#2b88d8" stroke="#0a6ebd"/><path d="M6 10.500h3v3H6z" fill="#a19f9d"/></svg>
      <svg class="w-[18px] h-[18px]" viewBox="0 0 18 18" fill="none" stroke="#0a6ebd"><path d="M11 1h6v4h-6zM11 7h6v4h-6zM11 13h6v4h-6z" fill="#6db2ea"/><path d="M1 7h6v4H1z" fill="#6db2ea"/><path d="M7 9h4M9 3v12M9 3h2M9 15h2" stroke="#323130"/></svg>
      <svg class="w-[18px] h-[18px]" viewBox="0 0 18 18" fill="none" stroke="#323130"><path d="M3 3V1h9l4 4v12H3v-3M12 1v4h4"/><circle cx="3" cy="7" r="2" fill="#6db2ea" stroke="#0a6ebd"/><path d="M7 8h7M6 12h6" stroke="#0a6ebd"/></svg>
      <svg class="w-[18px] h-[18px]" viewBox="0 0 18 18" fill="none" stroke="#323130"><path d="M5 1h8v6c0 3-2 4-4 4S5 10 5 7z" fill="#fff"/><path d="M5 3H1c0 4 2 5 4 5M13 3h4c0 4-2 5-4 5M9 11v3M5 17l1-3h6l1 3z"/><path d="M6 2h3v6H6z" fill="#2b88d8" stroke="none"/></svg>
      <svg class="w-[18px] h-[18px]" viewBox="0 0 18 18" fill="none" stroke="#323130"><path d="M2 1h10l4 4v12H2z" fill="#e1dfdd"/><path d="M12 1v4h4M5 14v-3M9 14V7M13 14v-5" stroke-width="1.800"/></svg>
      <!-- row 7 -->
      <svg class="w-[18px] h-[18px]" viewBox="0 0 18 18" fill="none" stroke="#605e5c"><path d="M10 1h7v7h-7zM1 11h7v6H1z"/><path d="M9 10h9l-4 4v4l-2-1v-3z" fill="#f3f2f1" stroke="#323130"/><path d="M4 0h3L5 4h3L2 11l1-5H0z" fill="#f5a623" stroke="#c8651b" stroke-width=".6"/></svg>
      <svg class="w-[18px] h-[18px]" viewBox="0 0 18 18" fill="none" stroke="#323130"><path d="M6 2h12v7M10 15H1V9"/><path d="M6 12l2-6 2 6" stroke="#2b88d8"/><path d="M9 10h9l-4 4v4l-2-1v-3z" fill="#f3f2f1"/><path d="M4 0h3L5 4h3L2 11l1-5H0z" fill="#f5a623" stroke="#c8651b" stroke-width=".6"/></svg>
      <svg class="w-[18px] h-[18px]" viewBox="0 0 18 18" fill="none" stroke="#323130"><path d="M6 2h12v7M10 15H1V9M8 6h7"/><path d="M6 11h2v2H6z"/><path d="M9 10h9l-4 4v4l-2-1v-3z" fill="#f3f2f1"/><path d="M4 0h3L5 4h3L2 11l1-5H0z" fill="#f5a623" stroke="#c8651b" stroke-width=".6"/></svg>
      <svg class="w-[18px] h-[18px]" viewBox="0 0 18 18" fill="none" stroke="#323130"><path d="M.5 2.500h17v13H.5z"/><path d="M1 13l5-6 4 4 3-3 4 4v3H1z" fill="#6db2ea" stroke="#0a6ebd"/><circle cx="13" cy="5.500" r="1" fill="#f08c28" stroke="none"/></svg>
      <svg class="w-[18px] h-[18px]" viewBox="0 0 18 18" fill="none"><path d="M3 3h14v14H3z" stroke="#0a6ebd" stroke-width="1.300"/><path d="M3 17c3-1 5-3 6-6 2-2 5-2 7-2v8z" fill="#6db2ea"/><path d="M4 0c2 0 3 1 3 3 0 1-1 3-2 5-1-2-3-4-3-5 0-2 1-3 2-3z" fill="#e8791c"/><circle cx="15" cy="15" r="3" fill="#e8791c"/><circle cx="13" cy="10" r="1.500" fill="#e8791c"/></svg>
      <svg class="w-[18px] h-[18px]" viewBox="0 0 18 18" fill="none" stroke="#8e44ad" stroke-width="1.200"><path d="M9 1l3 3-3 3-3-3zM14 6l3 3-3 3-3-3zM4 6l3 3-3 3-3-3zM9 11l3 3-3 3-3-3z"/></svg>
      <!-- row 8 -->
      <svg class="w-[18px] h-[18px]" viewBox="0 0 18 18" fill="none" stroke="#118dff" stroke-width="1.200"><path d="M1 2h9l7 7-7 7H1l7-7zM5 12l5-5M7 14l6-6"/></svg>
      <span class="w-[18px] text-center text-[#8a5a32] text-[12px] leading-[18px] tracking-[1px] font-bold">···</span>
    </div>
    <div class="pl-[13px] h-[31px] pt-[2px] shrink-0 flex items-center leading-[16px]">Columns</div>
    <div class="ml-[5px] w-[170px] border border-dashed border-[#a19f9d] border-b-0 pl-[2px] pt-[3px] flex flex-col gap-[3px]">
      <div class="h-[22px] w-[164px] shrink-0 flex items-center bg-[#edebe9] border border-[#c8c6c4] rounded-[2px] pl-[4px]"><span>GTIN</span><svg class="w-[10px] h-[10px] ml-auto" viewBox="0 0 10 10" fill="none" stroke="#605e5c"><path d="M0 2.500l5 5 5-5"/></svg><svg class="w-[9px] h-[9px] ml-[6px] mr-[4px]" viewBox="0 0 9 9" fill="none" stroke="#323130"><path d="M.5.5l8 8M8.500.5l-8 8"/></svg></div>
      <div class="h-[22px] w-[164px] shrink-0 flex items-center bg-[#edebe9] border border-[#c8c6c4] rounded-[2px] pl-[4px]"><span>SKU</span><svg class="w-[10px] h-[10px] ml-auto" viewBox="0 0 10 10" fill="none" stroke="#605e5c"><path d="M0 2.500l5 5 5-5"/></svg><svg class="w-[9px] h-[9px] ml-[6px] mr-[4px]" viewBox="0 0 9 9" fill="none" stroke="#323130"><path d="M.5.5l8 8M8.500.5l-8 8"/></svg></div>
      <div class="h-[22px] w-[164px] shrink-0 flex items-center bg-[#edebe9] border border-[#c8c6c4] rounded-[2px] pl-[4px]"><span>Description</span><svg class="w-[10px] h-[10px] ml-auto" viewBox="0 0 10 10" fill="none" stroke="#605e5c"><path d="M0 2.500l5 5 5-5"/></svg><svg class="w-[9px] h-[9px] ml-[6px] mr-[4px]" viewBox="0 0 9 9" fill="none" stroke="#323130"><path d="M.5.5l8 8M8.500.5l-8 8"/></svg></div>
      <div class="h-[22px] w-[164px] shrink-0 flex items-center bg-[#edebe9] border border-[#c8c6c4] rounded-[2px] pl-[4px]"><span>MinQty</span><svg class="w-[10px] h-[10px] ml-auto" viewBox="0 0 10 10" fill="none" stroke="#605e5c"><path d="M0 2.500l5 5 5-5"/></svg><svg class="w-[9px] h-[9px] ml-[6px] mr-[4px]" viewBox="0 0 9 9" fill="none" stroke="#323130"><path d="M.5.5l8 8M8.500.5l-8 8"/></svg></div>
      <div class="h-[22px] w-[164px] shrink-0 flex items-center bg-[#edebe9] border border-[#c8c6c4] rounded-[2px] pl-[4px]"><span>MaxQty</span><svg class="w-[10px] h-[10px] ml-auto" viewBox="0 0 10 10" fill="none" stroke="#605e5c"><path d="M0 2.500l5 5 5-5"/></svg><svg class="w-[9px] h-[9px] ml-[6px] mr-[4px]" viewBox="0 0 9 9" fill="none" stroke="#323130"><path d="M.5.5l8 8M8.500.5l-8 8"/></svg></div>
      <div class="h-[22px] w-[164px] shrink-0 flex items-center bg-[#edebe9] border border-[#c8c6c4] rounded-[2px] pl-[4px]"><span>Physical</span><svg class="w-[10px] h-[10px] ml-auto" viewBox="0 0 10 10" fill="none" stroke="#605e5c"><path d="M0 2.500l5 5 5-5"/></svg><svg class="w-[9px] h-[9px] ml-[6px] mr-[4px]" viewBox="0 0 9 9" fill="none" stroke="#323130"><path d="M.5.5l8 8M8.500.5l-8 8"/></svg></div>
      <div class="h-[22px] w-[164px] shrink-0 flex items-center bg-[#edebe9] border border-[#c8c6c4] rounded-[2px] pl-[4px]"><span>Location</span><svg class="w-[10px] h-[10px] ml-auto" viewBox="0 0 10 10" fill="none" stroke="#605e5c"><path d="M0 2.500l5 5 5-5"/></svg><svg class="w-[9px] h-[9px] ml-[6px] mr-[4px]" viewBox="0 0 9 9" fill="none" stroke="#323130"><path d="M.5.5l8 8M8.500.5l-8 8"/></svg></div>
      <div class="h-[22px] w-[164px] shrink-0 flex items-center bg-[#edebe9] border border-[#c8c6c4] rounded-[2px] pl-[4px]"></div>
    </div>
  </div>

  <!-- Data pane -->
  <div class="flex-1 bg-[#f3f2f1] overflow-hidden flex flex-col">
    <div class="h-[38px] shrink-0 flex items-center pl-[9px] pt-[1px]">
      <span class="text-[16px] font-medium">Data</span>
      <svg class="w-[14px] h-[14px] ml-auto mr-[2px]" viewBox="0 0 14 14" fill="none" stroke="#252423" stroke-width="1.100"><path d="M1 1l6 6-6 6M6 1l6 6-6 6"/></svg>
    </div>
    <div class="ml-[5px] mt-[6px] h-[24px] shrink-0 flex items-center bg-white border border-[#c8c6c4] border-b-[#8a8886] border-r-0 rounded-l-[3px]">
      <svg class="w-[16px] h-[16px] ml-[10px]" viewBox="0 0 16 16" fill="none" stroke="#605e5c"><circle cx="6.500" cy="6.500" r="5.500"/><path d="M10.500 10.500L15 15"/></svg>
      <span class="ml-[7px] text-[13px] text-[#605e5c]">Search</span>
    </div>
    <div class="h-[33px] shrink-0 flex items-center relative">
      <svg class="w-[10px] h-[10px] ml-[14px]" viewBox="0 0 10 10" fill="none" stroke="#605e5c"><path d="M0 2.500l5 5 5-5"/></svg>
      <svg class="w-[12px] h-[12px] ml-[7px]" viewBox="0 0 12 12" fill="none" stroke="#323130"><path d="M1 1h10v10H1zM1 4h10M1 8h10M4 1v10M8 1v10"/></svg>
      <span class="ml-[2px]">Stock List</span>
      <svg class="absolute left-[29px] top-[17px] w-[12px] h-[12px]" viewBox="0 0 12 12"><circle cx="6" cy="6" r="6" fill="#117865"/><path d="M3 6l2 2 4-4" fill="none" stroke="#fff"/></svg>
    </div>
    <div class="flex flex-col">
      <div class="h-[24px] flex items-center pl-[45px] text-[#605e5c]"><span class="w-[12px] h-[12px] rounded-[2px] bg-[#117865] border border-[#8a8886] flex items-center justify-center"><svg class="w-[10px] h-[10px]" viewBox="0 0 10 10" fill="none" stroke="#fff"><path d="M1.500 5l2.500 2.500 4.500-4.500"/></svg></span><span class="ml-[26px]">Description</span></div>
      <div class="h-[24px] flex items-center pl-[45px] text-[#605e5c]"><span class="w-[12px] h-[12px] rounded-[2px] border border-[#8a8886]"></span><span class="ml-[26px]">DeviceList</span></div>
      <div class="h-[24px] flex items-center pl-[45px] text-[#605e5c]"><span class="w-[12px] h-[12px] rounded-[2px] bg-[#117865] border border-[#8a8886] flex items-center justify-center"><svg class="w-[10px] h-[10px]" viewBox="0 0 10 10" fill="none" stroke="#fff"><path d="M1.500 5l2.500 2.500 4.500-4.500"/></svg></span><span class="ml-[26px]">DeviceName</span></div>
      <div class="h-[24px] flex items-center pl-[45px] text-[#605e5c]"><span class="w-[12px] h-[12px] rounded-[2px] bg-[#117865] border border-[#8a8886] flex items-center justify-center"><svg class="w-[10px] h-[10px]" viewBox="0 0 10 10" fill="none" stroke="#fff"><path d="M1.500 5l2.500 2.500 4.500-4.500"/></svg></span><span class="ml-[26px]">GTIN</span></div>
      <div class="h-[24px] flex items-center pl-[45px] text-[#605e5c]"><span class="w-[12px] h-[12px] rounded-[2px] border border-[#8a8886]"></span><span class="ml-[26px]">id</span></div>
      <div class="h-[24px] flex items-center pl-[45px] text-[#605e5c]"><span class="w-[12px] h-[12px] rounded-[2px] bg-[#117865] border border-[#8a8886] flex items-center justify-center"><svg class="w-[10px] h-[10px]" viewBox="0 0 10 10" fill="none" stroke="#fff"><path d="M1.500 5l2.500 2.500 4.500-4.500"/></svg></span><span class="ml-[26px]">Location</span></div>
      <div class="h-[24px] flex items-center pl-[45px] text-[#605e5c]"><span class="w-[12px] h-[12px] rounded-[2px] bg-[#117865] border border-[#8a8886] flex items-center justify-center"><svg class="w-[10px] h-[10px]" viewBox="0 0 10 10" fill="none" stroke="#fff"><path d="M1.500 5l2.500 2.500 4.500-4.500"/></svg></span><span class="ml-[26px]">LocationAlias</span></div>
      <div class="h-[24px] flex items-center pl-[45px] text-[#605e5c]"><span class="w-[12px] h-[12px] rounded-[2px] bg-[#117865] border border-[#8a8886] flex items-center justify-center"><svg class="w-[10px] h-[10px]" viewBox="0 0 10 10" fill="none" stroke="#fff"><path d="M1.500 5l2.500 2.500 4.500-4.500"/></svg></span><span class="ml-[26px]">MaxQty</span></div>
      <div class="h-[24px] flex items-center pl-[45px] text-[#605e5c]"><span class="w-[12px] h-[12px] rounded-[2px] bg-[#117865] border border-[#8a8886] flex items-center justify-center"><svg class="w-[10px] h-[10px]" viewBox="0 0 10 10" fill="none" stroke="#fff"><path d="M1.500 5l2.500 2.500 4.500-4.500"/></svg></span><span class="ml-[26px]">MinQty</span></div>
      <div class="h-[24px] flex items-center pl-[45px] text-[#605e5c]"><span class="w-[12px] h-[12px] rounded-[2px] bg-[#117865] border border-[#8a8886] flex items-center justify-center"><svg class="w-[10px] h-[10px]" viewBox="0 0 10 10" fill="none" stroke="#fff"><path d="M1.500 5l2.500 2.500 4.500-4.500"/></svg></span><span class="ml-[26px]">Physical</span></div>
      <div class="h-[24px] flex items-center pl-[45px] text-[#605e5c]"><span class="w-[12px] h-[12px] rounded-[2px] bg-[#117865] border border-[#8a8886] flex items-center justify-center"><svg class="w-[10px] h-[10px]" viewBox="0 0 10 10" fill="none" stroke="#fff"><path d="M1.500 5l2.500 2.500 4.500-4.500"/></svg></span><span class="ml-[26px]">SKU</span></div>
    </div>
  </div>
</div>
</body>
</html>
